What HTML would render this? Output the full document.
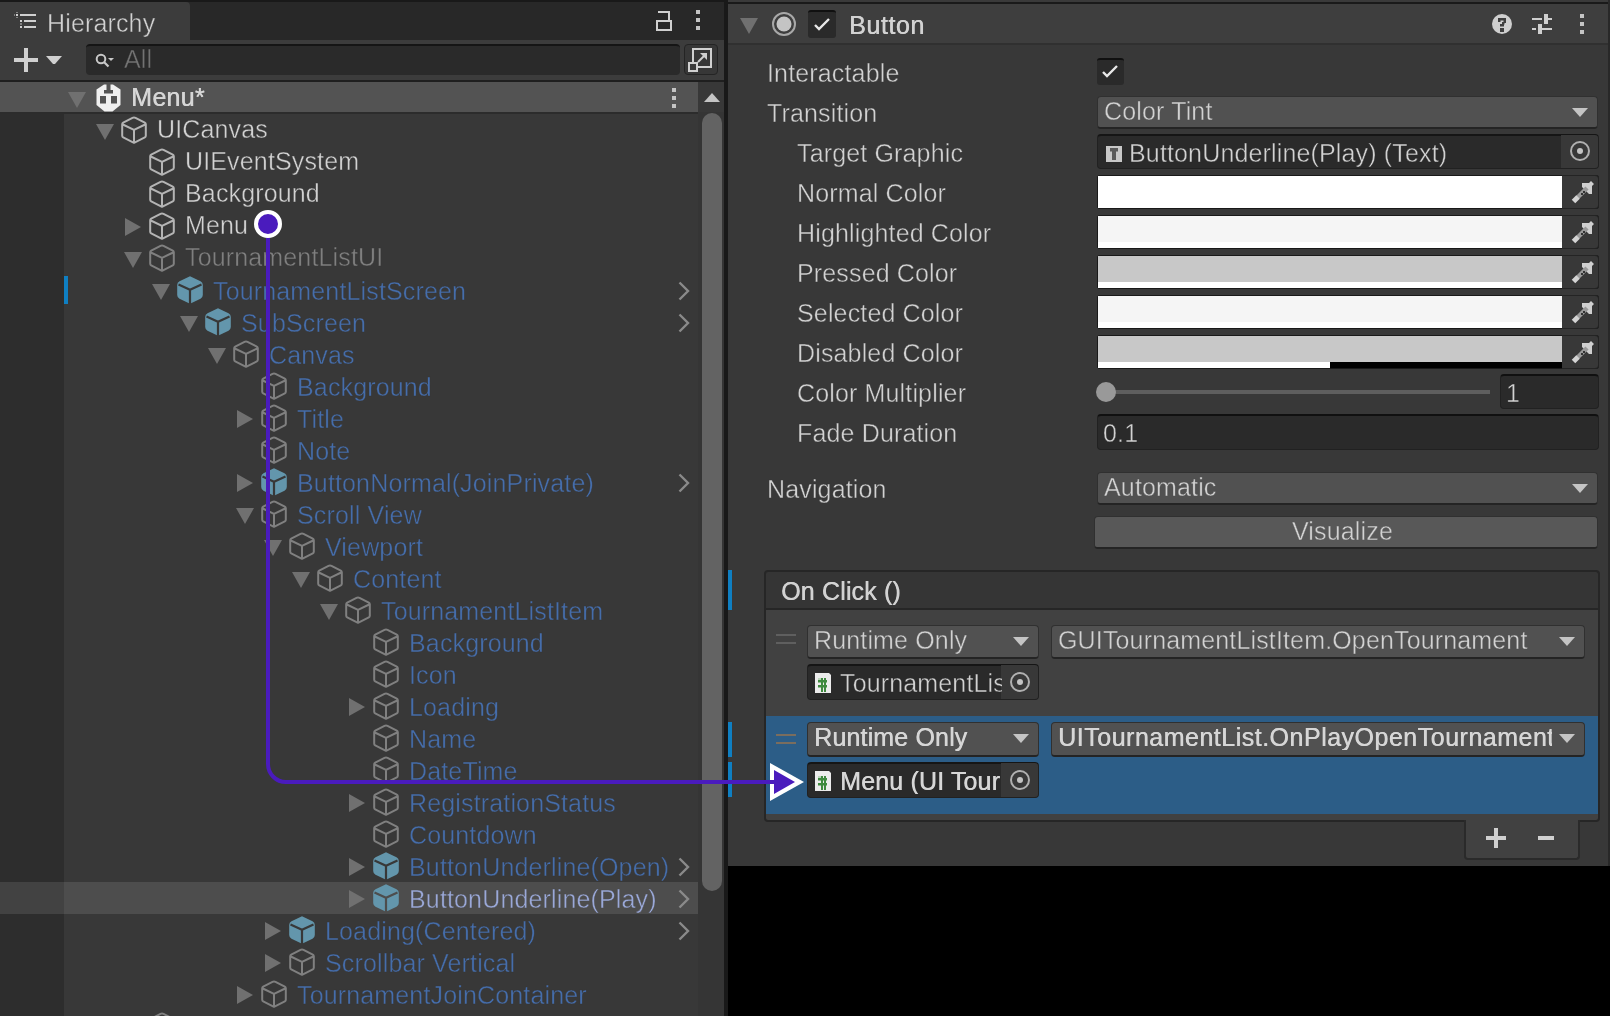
<!DOCTYPE html><html><head><meta charset="utf-8"><style>
html,body{margin:0;padding:0;background:#000;width:1610px;height:1016px;overflow:hidden;font-family:"Liberation Sans", sans-serif;}
.t{position:absolute;white-space:nowrap;letter-spacing:0.15px;will-change:transform;font-family:"Liberation Sans",sans-serif;}
.r{position:absolute;}
.s{position:absolute;overflow:visible;}
</style></head><body>
<div class="r" style="left:0px;top:0px;width:728px;height:1016px;background:#383838;"></div>
<div class="r" style="left:0px;top:0px;width:728px;height:2px;background:#191919;"></div>
<div class="r" style="left:0px;top:2px;width:724px;height:38px;background:#282828;"></div>
<div class="r" style="left:0px;top:2px;width:190px;height:38px;background:#3c3c3c;border-top-right-radius:4px;"></div>
<svg class="s" style="left:8px;top:6px;" width="40" height="30" viewBox="0 0 40 30"><g fill="#d0d0d0"><rect x="8" y="8" width="2" height="2"/><rect x="12" y="8" width="16" height="2"/><rect x="12" y="14" width="2" height="2"/><rect x="16" y="14" width="12" height="2"/><rect x="12" y="20" width="2" height="2"/><rect x="16" y="20" width="12" height="2"/></g><g fill="#808080"><rect x="8" y="6" width="2" height="1"/><rect x="8" y="11" width="2" height="1"/><rect x="12" y="17" width="2" height="2"/><rect x="6" y="8" width="1" height="2"/></g></svg>
<div class="t" style="left:47px;top:11px;color:#d2d2d2;font-size:25px;line-height:25px;-webkit-text-stroke:0.4px #3c3c3c;">Hierarchy</div>
<svg class="s" style="left:655px;top:9px;" width="18" height="22" viewBox="0 0 18 22"><path d="M3 3H14V11" fill="none" stroke="#d0d0d0" stroke-width="2"/><rect x="2" y="12" width="14" height="9" fill="none" stroke="#d0d0d0" stroke-width="2"/></svg>
<svg class="s" style="left:695px;top:10px;" width="6" height="20" viewBox="0 0 6 20"><g fill="#c4c4c4"><rect x="1" y="0" width="4" height="4"/><rect x="1" y="8" width="4" height="4"/><rect x="1" y="16" width="4" height="4"/></g></svg>
<div class="r" style="left:0px;top:40px;width:724px;height:40px;background:#3c3c3c;"></div>
<svg class="s" style="left:14px;top:48px;" width="24" height="24" viewBox="0 0 24 24"><path d="M12 0V24M0 12H24" stroke="#d0d0d0" stroke-width="4"/></svg>
<svg class="s" style="left:46px;top:56px;" width="16" height="9" viewBox="0 0 16 9"><path d="M0 0H16L9 8H7Z" fill="#d0d0d0"/></svg>
<div class="r" style="left:86px;top:44px;width:594px;height:31px;background:#2a2a2a;border-radius:4px;border-top:2px solid #151515;box-sizing:border-box;"></div>
<svg class="s" style="left:94px;top:52px;" width="24" height="18" viewBox="0 0 24 18"><circle cx="7" cy="7" r="4.3" fill="none" stroke="#c8c8c8" stroke-width="2"/><path d="M10 10L14.5 14.5" stroke="#c8c8c8" stroke-width="2.2"/><path d="M14 6H20L17 9Z" fill="#c8c8c8"/></svg>
<div class="t" style="left:124px;top:47px;color:#727272;font-size:25px;line-height:25px;-webkit-text-stroke:0.4px #2a2a2a;">All</div>
<div class="r" style="left:684px;top:44px;width:34px;height:31px;background:#373737;border-radius:4px;border:1px solid #242424;box-sizing:border-box;"></div>
<svg class="s" style="left:684px;top:44px;" width="34" height="32" viewBox="0 0 34 32"><rect x="9" y="5" width="18" height="18" fill="none" stroke="#d0d0d0" stroke-width="2"/><rect x="5" y="19" width="8" height="8" fill="#3a3a3a" stroke="#d0d0d0" stroke-width="2"/><path d="M14 18L21 11" stroke="#d0d0d0" stroke-width="2"/><path d="M16 9H23V16Z" fill="#d0d0d0"/></svg>
<div class="r" style="left:0px;top:80px;width:724px;height:2px;background:#1f1f1f;"></div>
<div class="r" style="left:0px;top:82px;width:698px;height:30px;background:#535353;"></div>
<svg class="s" style="left:68px;top:92px;" width="18" height="16" viewBox="0 0 18 16"><path d="M0 0H18L9.0 16Z" fill="#707070"/></svg>
<svg class="s" style="left:96px;top:84px;" width="25" height="28" viewBox="0 0 25 28"><path d="M8 0.5H17L24.5 5.5V21L16.5 27.5H8.5L0.5 21V5.5Z" fill="#f0f0f0"/><g fill="#535353"><rect x="10.5" y="0" width="4" height="7"/><rect x="8" y="6" width="9" height="3.5"/><rect x="4" y="12" width="6" height="7.5"/><rect x="15" y="12" width="6" height="7.5"/></g></svg>
<div class="t" style="left:131px;top:85px;color:#d6d6d6;font-size:25px;line-height:25px;text-shadow:0.5px 0 0 #d6d6d6;letter-spacing:0.3px;">Menu*</div>
<svg class="s" style="left:672px;top:88px;" width="4" height="20" viewBox="0 0 4 20"><g fill="#c4c4c4"><rect x="0" y="0" width="4" height="4"/><rect x="0" y="8" width="4" height="4"/><rect x="0" y="16" width="4" height="4"/></g></svg>
<div class="r" style="left:698px;top:82px;width:26px;height:934px;background:#353535;"></div>
<div class="r" style="left:698px;top:82px;width:26px;height:30px;background:#383838;"></div>
<svg class="s" style="left:704px;top:93px;" width="16" height="9" viewBox="0 0 16 9"><path d="M0 9H16L8 0Z" fill="#c4c4c4"/></svg>
<div class="r" style="left:702px;top:113px;width:20px;height:778px;background:#636363;border-radius:10px;"></div>
<div class="r" style="left:724px;top:0px;width:4px;height:1016px;background:#191919;"></div>
<div class="r" style="left:0px;top:112px;width:698px;height:2px;background:#2c2c2c;"></div>
<div class="r" style="left:0px;top:114px;width:64px;height:902px;background:#2d2d2d;"></div>
<svg class="s" style="left:96px;top:124px;" width="18" height="16" viewBox="0 0 18 16"><path d="M0 0H18L9.0 16Z" fill="#707070"/></svg>
<svg class="s" style="left:121px;top:116px;" width="26" height="28" viewBox="0 0 26 28"><path d="M11.5 1.8Q13 1 14.5 1.8L23.8 6.6Q24.8 7.1 24.8 8.2V19.8Q24.8 20.9 23.8 21.4L13 26.8L2.2 21.4Q1.2 20.9 1.2 19.8V8.2Q1.2 7.1 2.2 6.6Z M1.8 8.5L13 13.8L24.2 8.5 M13 13.8V26.8" fill="none" stroke="#b4b4b4" stroke-width="2" stroke-linejoin="round"/></svg>
<div class="t" style="left:157px;top:117px;color:#d2d2d2;font-size:25px;line-height:25px;-webkit-text-stroke:0.4px #383838;">UICanvas</div>
<svg class="s" style="left:149px;top:148px;" width="26" height="28" viewBox="0 0 26 28"><path d="M11.5 1.8Q13 1 14.5 1.8L23.8 6.6Q24.8 7.1 24.8 8.2V19.8Q24.8 20.9 23.8 21.4L13 26.8L2.2 21.4Q1.2 20.9 1.2 19.8V8.2Q1.2 7.1 2.2 6.6Z M1.8 8.5L13 13.8L24.2 8.5 M13 13.8V26.8" fill="none" stroke="#b4b4b4" stroke-width="2" stroke-linejoin="round"/></svg>
<div class="t" style="left:185px;top:149px;color:#d2d2d2;font-size:25px;line-height:25px;-webkit-text-stroke:0.4px #383838;">UIEventSystem</div>
<svg class="s" style="left:149px;top:180px;" width="26" height="28" viewBox="0 0 26 28"><path d="M11.5 1.8Q13 1 14.5 1.8L23.8 6.6Q24.8 7.1 24.8 8.2V19.8Q24.8 20.9 23.8 21.4L13 26.8L2.2 21.4Q1.2 20.9 1.2 19.8V8.2Q1.2 7.1 2.2 6.6Z M1.8 8.5L13 13.8L24.2 8.5 M13 13.8V26.8" fill="none" stroke="#b4b4b4" stroke-width="2" stroke-linejoin="round"/></svg>
<div class="t" style="left:185px;top:181px;color:#d2d2d2;font-size:25px;line-height:25px;-webkit-text-stroke:0.4px #383838;">Background</div>
<svg class="s" style="left:125px;top:218px;" width="16" height="18" viewBox="0 0 16 18"><path d="M0 0L16 9.0L0 18Z" fill="#707070"/></svg>
<svg class="s" style="left:149px;top:212px;" width="26" height="28" viewBox="0 0 26 28"><path d="M11.5 1.8Q13 1 14.5 1.8L23.8 6.6Q24.8 7.1 24.8 8.2V19.8Q24.8 20.9 23.8 21.4L13 26.8L2.2 21.4Q1.2 20.9 1.2 19.8V8.2Q1.2 7.1 2.2 6.6Z M1.8 8.5L13 13.8L24.2 8.5 M13 13.8V26.8" fill="none" stroke="#b4b4b4" stroke-width="2" stroke-linejoin="round"/></svg>
<div class="t" style="left:185px;top:213px;color:#d2d2d2;font-size:25px;line-height:25px;-webkit-text-stroke:0.4px #383838;">Menu</div>
<svg class="s" style="left:124px;top:252px;" width="18" height="16" viewBox="0 0 18 16"><path d="M0 0H18L9.0 16Z" fill="#707070"/></svg>
<svg class="s" style="left:149px;top:244px;" width="26" height="28" viewBox="0 0 26 28"><path d="M11.5 1.8Q13 1 14.5 1.8L23.8 6.6Q24.8 7.1 24.8 8.2V19.8Q24.8 20.9 23.8 21.4L13 26.8L2.2 21.4Q1.2 20.9 1.2 19.8V8.2Q1.2 7.1 2.2 6.6Z M1.8 8.5L13 13.8L24.2 8.5 M13 13.8V26.8" fill="none" stroke="#808080" stroke-width="2" stroke-linejoin="round"/></svg>
<div class="t" style="left:185px;top:245px;color:#7f7f7f;font-size:25px;line-height:25px;-webkit-text-stroke:0.4px #383838;">TournamentListUI</div>
<svg class="s" style="left:152px;top:284px;" width="18" height="16" viewBox="0 0 18 16"><path d="M0 0H18L9.0 16Z" fill="#707070"/></svg>
<svg class="s" style="left:177px;top:276px;" width="26" height="28" viewBox="0 0 26 28"><path d="M13 0.3L23.5 5.3Q25.8 6.4 25.8 9V19Q25.8 21.6 23.5 22.7L13 27.8L2.5 22.7Q0.2 21.6 0.2 19V9Q0.2 6.4 2.5 5.3Z" fill="#6396ac"/><path d="M1.5 8.5L13 13.8L24.5 8.5 M13 13.8V28" fill="none" stroke="#383838" stroke-width="2.2"/></svg>
<div class="t" style="left:213px;top:279px;color:#456dab;font-size:25px;line-height:25px;-webkit-text-stroke:0.4px #383838;">TournamentListScreen</div>
<svg class="s" style="left:677px;top:281px;" width="14" height="20" viewBox="0 0 14 20"><path d="M2.5 1.5L11 10L2.5 18.5" fill="none" stroke="#8a8a8a" stroke-width="2.4"/></svg>
<svg class="s" style="left:180px;top:316px;" width="18" height="16" viewBox="0 0 18 16"><path d="M0 0H18L9.0 16Z" fill="#707070"/></svg>
<svg class="s" style="left:205px;top:308px;" width="26" height="28" viewBox="0 0 26 28"><path d="M13 0.3L23.5 5.3Q25.8 6.4 25.8 9V19Q25.8 21.6 23.5 22.7L13 27.8L2.5 22.7Q0.2 21.6 0.2 19V9Q0.2 6.4 2.5 5.3Z" fill="#6396ac"/><path d="M1.5 8.5L13 13.8L24.5 8.5 M13 13.8V28" fill="none" stroke="#383838" stroke-width="2.2"/></svg>
<div class="t" style="left:241px;top:311px;color:#456dab;font-size:25px;line-height:25px;-webkit-text-stroke:0.4px #383838;">SubScreen</div>
<svg class="s" style="left:677px;top:313px;" width="14" height="20" viewBox="0 0 14 20"><path d="M2.5 1.5L11 10L2.5 18.5" fill="none" stroke="#8a8a8a" stroke-width="2.4"/></svg>
<svg class="s" style="left:208px;top:348px;" width="18" height="16" viewBox="0 0 18 16"><path d="M0 0H18L9.0 16Z" fill="#707070"/></svg>
<svg class="s" style="left:233px;top:340px;" width="26" height="28" viewBox="0 0 26 28"><path d="M11.5 1.8Q13 1 14.5 1.8L23.8 6.6Q24.8 7.1 24.8 8.2V19.8Q24.8 20.9 23.8 21.4L13 26.8L2.2 21.4Q1.2 20.9 1.2 19.8V8.2Q1.2 7.1 2.2 6.6Z M1.8 8.5L13 13.8L24.2 8.5 M13 13.8V26.8" fill="none" stroke="#808080" stroke-width="2" stroke-linejoin="round"/></svg>
<div class="t" style="left:269px;top:343px;color:#456dab;font-size:25px;line-height:25px;-webkit-text-stroke:0.4px #383838;">Canvas</div>
<svg class="s" style="left:261px;top:372px;" width="26" height="28" viewBox="0 0 26 28"><path d="M11.5 1.8Q13 1 14.5 1.8L23.8 6.6Q24.8 7.1 24.8 8.2V19.8Q24.8 20.9 23.8 21.4L13 26.8L2.2 21.4Q1.2 20.9 1.2 19.8V8.2Q1.2 7.1 2.2 6.6Z M1.8 8.5L13 13.8L24.2 8.5 M13 13.8V26.8" fill="none" stroke="#808080" stroke-width="2" stroke-linejoin="round"/></svg>
<div class="t" style="left:297px;top:375px;color:#456dab;font-size:25px;line-height:25px;-webkit-text-stroke:0.4px #383838;">Background</div>
<svg class="s" style="left:237px;top:410px;" width="16" height="18" viewBox="0 0 16 18"><path d="M0 0L16 9.0L0 18Z" fill="#707070"/></svg>
<svg class="s" style="left:261px;top:404px;" width="26" height="28" viewBox="0 0 26 28"><path d="M11.5 1.8Q13 1 14.5 1.8L23.8 6.6Q24.8 7.1 24.8 8.2V19.8Q24.8 20.9 23.8 21.4L13 26.8L2.2 21.4Q1.2 20.9 1.2 19.8V8.2Q1.2 7.1 2.2 6.6Z M1.8 8.5L13 13.8L24.2 8.5 M13 13.8V26.8" fill="none" stroke="#808080" stroke-width="2" stroke-linejoin="round"/></svg>
<div class="t" style="left:297px;top:407px;color:#456dab;font-size:25px;line-height:25px;-webkit-text-stroke:0.4px #383838;">Title</div>
<svg class="s" style="left:261px;top:436px;" width="26" height="28" viewBox="0 0 26 28"><path d="M11.5 1.8Q13 1 14.5 1.8L23.8 6.6Q24.8 7.1 24.8 8.2V19.8Q24.8 20.9 23.8 21.4L13 26.8L2.2 21.4Q1.2 20.9 1.2 19.8V8.2Q1.2 7.1 2.2 6.6Z M1.8 8.5L13 13.8L24.2 8.5 M13 13.8V26.8" fill="none" stroke="#808080" stroke-width="2" stroke-linejoin="round"/></svg>
<div class="t" style="left:297px;top:439px;color:#456dab;font-size:25px;line-height:25px;-webkit-text-stroke:0.4px #383838;">Note</div>
<svg class="s" style="left:237px;top:474px;" width="16" height="18" viewBox="0 0 16 18"><path d="M0 0L16 9.0L0 18Z" fill="#707070"/></svg>
<svg class="s" style="left:261px;top:468px;" width="26" height="28" viewBox="0 0 26 28"><path d="M13 0.3L23.5 5.3Q25.8 6.4 25.8 9V19Q25.8 21.6 23.5 22.7L13 27.8L2.5 22.7Q0.2 21.6 0.2 19V9Q0.2 6.4 2.5 5.3Z" fill="#6396ac"/><path d="M1.5 8.5L13 13.8L24.5 8.5 M13 13.8V28" fill="none" stroke="#383838" stroke-width="2.2"/></svg>
<div class="t" style="left:297px;top:471px;color:#456dab;font-size:25px;line-height:25px;-webkit-text-stroke:0.4px #383838;">ButtonNormal(JoinPrivate)</div>
<svg class="s" style="left:677px;top:473px;" width="14" height="20" viewBox="0 0 14 20"><path d="M2.5 1.5L11 10L2.5 18.5" fill="none" stroke="#8a8a8a" stroke-width="2.4"/></svg>
<svg class="s" style="left:236px;top:508px;" width="18" height="16" viewBox="0 0 18 16"><path d="M0 0H18L9.0 16Z" fill="#707070"/></svg>
<svg class="s" style="left:261px;top:500px;" width="26" height="28" viewBox="0 0 26 28"><path d="M11.5 1.8Q13 1 14.5 1.8L23.8 6.6Q24.8 7.1 24.8 8.2V19.8Q24.8 20.9 23.8 21.4L13 26.8L2.2 21.4Q1.2 20.9 1.2 19.8V8.2Q1.2 7.1 2.2 6.6Z M1.8 8.5L13 13.8L24.2 8.5 M13 13.8V26.8" fill="none" stroke="#808080" stroke-width="2" stroke-linejoin="round"/></svg>
<div class="t" style="left:297px;top:503px;color:#456dab;font-size:25px;line-height:25px;-webkit-text-stroke:0.4px #383838;">Scroll View</div>
<svg class="s" style="left:264px;top:540px;" width="18" height="16" viewBox="0 0 18 16"><path d="M0 0H18L9.0 16Z" fill="#707070"/></svg>
<svg class="s" style="left:289px;top:532px;" width="26" height="28" viewBox="0 0 26 28"><path d="M11.5 1.8Q13 1 14.5 1.8L23.8 6.6Q24.8 7.1 24.8 8.2V19.8Q24.8 20.9 23.8 21.4L13 26.8L2.2 21.4Q1.2 20.9 1.2 19.8V8.2Q1.2 7.1 2.2 6.6Z M1.8 8.5L13 13.8L24.2 8.5 M13 13.8V26.8" fill="none" stroke="#808080" stroke-width="2" stroke-linejoin="round"/></svg>
<div class="t" style="left:325px;top:535px;color:#456dab;font-size:25px;line-height:25px;-webkit-text-stroke:0.4px #383838;">Viewport</div>
<svg class="s" style="left:292px;top:572px;" width="18" height="16" viewBox="0 0 18 16"><path d="M0 0H18L9.0 16Z" fill="#707070"/></svg>
<svg class="s" style="left:317px;top:564px;" width="26" height="28" viewBox="0 0 26 28"><path d="M11.5 1.8Q13 1 14.5 1.8L23.8 6.6Q24.8 7.1 24.8 8.2V19.8Q24.8 20.9 23.8 21.4L13 26.8L2.2 21.4Q1.2 20.9 1.2 19.8V8.2Q1.2 7.1 2.2 6.6Z M1.8 8.5L13 13.8L24.2 8.5 M13 13.8V26.8" fill="none" stroke="#808080" stroke-width="2" stroke-linejoin="round"/></svg>
<div class="t" style="left:353px;top:567px;color:#456dab;font-size:25px;line-height:25px;-webkit-text-stroke:0.4px #383838;">Content</div>
<svg class="s" style="left:320px;top:604px;" width="18" height="16" viewBox="0 0 18 16"><path d="M0 0H18L9.0 16Z" fill="#707070"/></svg>
<svg class="s" style="left:345px;top:596px;" width="26" height="28" viewBox="0 0 26 28"><path d="M11.5 1.8Q13 1 14.5 1.8L23.8 6.6Q24.8 7.1 24.8 8.2V19.8Q24.8 20.9 23.8 21.4L13 26.8L2.2 21.4Q1.2 20.9 1.2 19.8V8.2Q1.2 7.1 2.2 6.6Z M1.8 8.5L13 13.8L24.2 8.5 M13 13.8V26.8" fill="none" stroke="#808080" stroke-width="2" stroke-linejoin="round"/></svg>
<div class="t" style="left:381px;top:599px;color:#456dab;font-size:25px;line-height:25px;-webkit-text-stroke:0.4px #383838;">TournamentListItem</div>
<svg class="s" style="left:373px;top:628px;" width="26" height="28" viewBox="0 0 26 28"><path d="M11.5 1.8Q13 1 14.5 1.8L23.8 6.6Q24.8 7.1 24.8 8.2V19.8Q24.8 20.9 23.8 21.4L13 26.8L2.2 21.4Q1.2 20.9 1.2 19.8V8.2Q1.2 7.1 2.2 6.6Z M1.8 8.5L13 13.8L24.2 8.5 M13 13.8V26.8" fill="none" stroke="#808080" stroke-width="2" stroke-linejoin="round"/></svg>
<div class="t" style="left:409px;top:631px;color:#456dab;font-size:25px;line-height:25px;-webkit-text-stroke:0.4px #383838;">Background</div>
<svg class="s" style="left:373px;top:660px;" width="26" height="28" viewBox="0 0 26 28"><path d="M11.5 1.8Q13 1 14.5 1.8L23.8 6.6Q24.8 7.1 24.8 8.2V19.8Q24.8 20.9 23.8 21.4L13 26.8L2.2 21.4Q1.2 20.9 1.2 19.8V8.2Q1.2 7.1 2.2 6.6Z M1.8 8.5L13 13.8L24.2 8.5 M13 13.8V26.8" fill="none" stroke="#808080" stroke-width="2" stroke-linejoin="round"/></svg>
<div class="t" style="left:409px;top:663px;color:#456dab;font-size:25px;line-height:25px;-webkit-text-stroke:0.4px #383838;">Icon</div>
<svg class="s" style="left:349px;top:698px;" width="16" height="18" viewBox="0 0 16 18"><path d="M0 0L16 9.0L0 18Z" fill="#707070"/></svg>
<svg class="s" style="left:373px;top:692px;" width="26" height="28" viewBox="0 0 26 28"><path d="M11.5 1.8Q13 1 14.5 1.8L23.8 6.6Q24.8 7.1 24.8 8.2V19.8Q24.8 20.9 23.8 21.4L13 26.8L2.2 21.4Q1.2 20.9 1.2 19.8V8.2Q1.2 7.1 2.2 6.6Z M1.8 8.5L13 13.8L24.2 8.5 M13 13.8V26.8" fill="none" stroke="#808080" stroke-width="2" stroke-linejoin="round"/></svg>
<div class="t" style="left:409px;top:695px;color:#456dab;font-size:25px;line-height:25px;-webkit-text-stroke:0.4px #383838;">Loading</div>
<svg class="s" style="left:373px;top:724px;" width="26" height="28" viewBox="0 0 26 28"><path d="M11.5 1.8Q13 1 14.5 1.8L23.8 6.6Q24.8 7.1 24.8 8.2V19.8Q24.8 20.9 23.8 21.4L13 26.8L2.2 21.4Q1.2 20.9 1.2 19.8V8.2Q1.2 7.1 2.2 6.6Z M1.8 8.5L13 13.8L24.2 8.5 M13 13.8V26.8" fill="none" stroke="#808080" stroke-width="2" stroke-linejoin="round"/></svg>
<div class="t" style="left:409px;top:727px;color:#456dab;font-size:25px;line-height:25px;-webkit-text-stroke:0.4px #383838;">Name</div>
<svg class="s" style="left:373px;top:756px;" width="26" height="28" viewBox="0 0 26 28"><path d="M11.5 1.8Q13 1 14.5 1.8L23.8 6.6Q24.8 7.1 24.8 8.2V19.8Q24.8 20.9 23.8 21.4L13 26.8L2.2 21.4Q1.2 20.9 1.2 19.8V8.2Q1.2 7.1 2.2 6.6Z M1.8 8.5L13 13.8L24.2 8.5 M13 13.8V26.8" fill="none" stroke="#808080" stroke-width="2" stroke-linejoin="round"/></svg>
<div class="t" style="left:409px;top:759px;color:#456dab;font-size:25px;line-height:25px;-webkit-text-stroke:0.4px #383838;">DateTime</div>
<svg class="s" style="left:349px;top:794px;" width="16" height="18" viewBox="0 0 16 18"><path d="M0 0L16 9.0L0 18Z" fill="#707070"/></svg>
<svg class="s" style="left:373px;top:788px;" width="26" height="28" viewBox="0 0 26 28"><path d="M11.5 1.8Q13 1 14.5 1.8L23.8 6.6Q24.8 7.1 24.8 8.2V19.8Q24.8 20.9 23.8 21.4L13 26.8L2.2 21.4Q1.2 20.9 1.2 19.8V8.2Q1.2 7.1 2.2 6.6Z M1.8 8.5L13 13.8L24.2 8.5 M13 13.8V26.8" fill="none" stroke="#808080" stroke-width="2" stroke-linejoin="round"/></svg>
<div class="t" style="left:409px;top:791px;color:#456dab;font-size:25px;line-height:25px;-webkit-text-stroke:0.4px #383838;">RegistrationStatus</div>
<svg class="s" style="left:373px;top:820px;" width="26" height="28" viewBox="0 0 26 28"><path d="M11.5 1.8Q13 1 14.5 1.8L23.8 6.6Q24.8 7.1 24.8 8.2V19.8Q24.8 20.9 23.8 21.4L13 26.8L2.2 21.4Q1.2 20.9 1.2 19.8V8.2Q1.2 7.1 2.2 6.6Z M1.8 8.5L13 13.8L24.2 8.5 M13 13.8V26.8" fill="none" stroke="#808080" stroke-width="2" stroke-linejoin="round"/></svg>
<div class="t" style="left:409px;top:823px;color:#456dab;font-size:25px;line-height:25px;-webkit-text-stroke:0.4px #383838;">Countdown</div>
<svg class="s" style="left:349px;top:858px;" width="16" height="18" viewBox="0 0 16 18"><path d="M0 0L16 9.0L0 18Z" fill="#707070"/></svg>
<svg class="s" style="left:373px;top:852px;" width="26" height="28" viewBox="0 0 26 28"><path d="M13 0.3L23.5 5.3Q25.8 6.4 25.8 9V19Q25.8 21.6 23.5 22.7L13 27.8L2.5 22.7Q0.2 21.6 0.2 19V9Q0.2 6.4 2.5 5.3Z" fill="#6396ac"/><path d="M1.5 8.5L13 13.8L24.5 8.5 M13 13.8V28" fill="none" stroke="#383838" stroke-width="2.2"/></svg>
<div class="t" style="left:409px;top:855px;color:#456dab;font-size:25px;line-height:25px;-webkit-text-stroke:0.4px #383838;">ButtonUnderline(Open)</div>
<svg class="s" style="left:677px;top:857px;" width="14" height="20" viewBox="0 0 14 20"><path d="M2.5 1.5L11 10L2.5 18.5" fill="none" stroke="#8a8a8a" stroke-width="2.4"/></svg>
<div class="r" style="left:0px;top:882px;width:64px;height:32px;background:#424242;"></div>
<div class="r" style="left:64px;top:882px;width:634px;height:32px;background:#4d4d4d;"></div>
<svg class="s" style="left:349px;top:890px;" width="16" height="18" viewBox="0 0 16 18"><path d="M0 0L16 9.0L0 18Z" fill="#707070"/></svg>
<svg class="s" style="left:373px;top:884px;" width="26" height="28" viewBox="0 0 26 28"><path d="M13 0.3L23.5 5.3Q25.8 6.4 25.8 9V19Q25.8 21.6 23.5 22.7L13 27.8L2.5 22.7Q0.2 21.6 0.2 19V9Q0.2 6.4 2.5 5.3Z" fill="#6396ac"/><path d="M1.5 8.5L13 13.8L24.5 8.5 M13 13.8V28" fill="none" stroke="#4d4d4d" stroke-width="2.2"/></svg>
<div class="t" style="left:409px;top:887px;color:#9aa8d8;font-size:25px;line-height:25px;-webkit-text-stroke:0.4px #4d4d4d;">ButtonUnderline(Play)</div>
<svg class="s" style="left:677px;top:889px;" width="14" height="20" viewBox="0 0 14 20"><path d="M2.5 1.5L11 10L2.5 18.5" fill="none" stroke="#8a8a8a" stroke-width="2.4"/></svg>
<svg class="s" style="left:265px;top:922px;" width="16" height="18" viewBox="0 0 16 18"><path d="M0 0L16 9.0L0 18Z" fill="#707070"/></svg>
<svg class="s" style="left:289px;top:916px;" width="26" height="28" viewBox="0 0 26 28"><path d="M13 0.3L23.5 5.3Q25.8 6.4 25.8 9V19Q25.8 21.6 23.5 22.7L13 27.8L2.5 22.7Q0.2 21.6 0.2 19V9Q0.2 6.4 2.5 5.3Z" fill="#6396ac"/><path d="M1.5 8.5L13 13.8L24.5 8.5 M13 13.8V28" fill="none" stroke="#383838" stroke-width="2.2"/></svg>
<div class="t" style="left:325px;top:919px;color:#456dab;font-size:25px;line-height:25px;-webkit-text-stroke:0.4px #383838;">Loading(Centered)</div>
<svg class="s" style="left:677px;top:921px;" width="14" height="20" viewBox="0 0 14 20"><path d="M2.5 1.5L11 10L2.5 18.5" fill="none" stroke="#8a8a8a" stroke-width="2.4"/></svg>
<svg class="s" style="left:265px;top:954px;" width="16" height="18" viewBox="0 0 16 18"><path d="M0 0L16 9.0L0 18Z" fill="#707070"/></svg>
<svg class="s" style="left:289px;top:948px;" width="26" height="28" viewBox="0 0 26 28"><path d="M11.5 1.8Q13 1 14.5 1.8L23.8 6.6Q24.8 7.1 24.8 8.2V19.8Q24.8 20.9 23.8 21.4L13 26.8L2.2 21.4Q1.2 20.9 1.2 19.8V8.2Q1.2 7.1 2.2 6.6Z M1.8 8.5L13 13.8L24.2 8.5 M13 13.8V26.8" fill="none" stroke="#808080" stroke-width="2" stroke-linejoin="round"/></svg>
<div class="t" style="left:325px;top:951px;color:#456dab;font-size:25px;line-height:25px;-webkit-text-stroke:0.4px #383838;">Scrollbar Vertical</div>
<svg class="s" style="left:237px;top:986px;" width="16" height="18" viewBox="0 0 16 18"><path d="M0 0L16 9.0L0 18Z" fill="#707070"/></svg>
<svg class="s" style="left:261px;top:980px;" width="26" height="28" viewBox="0 0 26 28"><path d="M11.5 1.8Q13 1 14.5 1.8L23.8 6.6Q24.8 7.1 24.8 8.2V19.8Q24.8 20.9 23.8 21.4L13 26.8L2.2 21.4Q1.2 20.9 1.2 19.8V8.2Q1.2 7.1 2.2 6.6Z M1.8 8.5L13 13.8L24.2 8.5 M13 13.8V26.8" fill="none" stroke="#808080" stroke-width="2" stroke-linejoin="round"/></svg>
<div class="t" style="left:297px;top:983px;color:#456dab;font-size:25px;line-height:25px;-webkit-text-stroke:0.4px #383838;">TournamentJoinContainer</div>
<svg class="s" style="left:149px;top:1012px;" width="26" height="28" viewBox="0 0 26 28"><path d="M11.5 1.8Q13 1 14.5 1.8L23.8 6.6Q24.8 7.1 24.8 8.2V19.8Q24.8 20.9 23.8 21.4L13 26.8L2.2 21.4Q1.2 20.9 1.2 19.8V8.2Q1.2 7.1 2.2 6.6Z M1.8 8.5L13 13.8L24.2 8.5 M13 13.8V26.8" fill="none" stroke="#808080" stroke-width="2" stroke-linejoin="round"/></svg>
<div class="r" style="left:64px;top:276px;width:4px;height:28px;background:#0f7fc2;"></div>
<div class="r" style="left:728px;top:0px;width:882px;height:866px;background:#383838;"></div>
<div class="r" style="left:728px;top:0px;width:882px;height:2px;background:#3a3a3a;"></div>
<div class="r" style="left:728px;top:2px;width:882px;height:2px;background:#1a1a1a;"></div>
<div class="r" style="left:728px;top:4px;width:880px;height:39px;background:#3e3e3e;"></div>
<div class="r" style="left:728px;top:43px;width:880px;height:2px;background:#303030;"></div>
<div class="r" style="left:1608px;top:0px;width:2px;height:866px;background:#282828;"></div>
<svg class="s" style="left:740px;top:18px;" width="18" height="16" viewBox="0 0 18 16"><path d="M0 0H18L9.0 16Z" fill="#707070"/></svg>
<svg class="s" style="left:772px;top:12px;" width="24" height="24" viewBox="0 0 24 24"><circle cx="12" cy="12" r="11" fill="none" stroke="#a8a8a8" stroke-width="2"/><circle cx="12" cy="12" r="7.5" fill="#c4c4c4"/></svg>
<div class="r" style="left:808px;top:10px;width:28px;height:28px;background:#2a2a2a;border-radius:3px;border-top:2px solid #101010;box-sizing:border-box;"></div>
<svg class="s" style="left:808px;top:10px;" width="28" height="28" viewBox="0 0 28 28"><path d="M7 15L11 19L21 9" fill="none" stroke="#e8e8e8" stroke-width="2.4"/></svg>
<div class="t" style="left:849px;top:13px;color:#d2d2d2;font-size:25px;line-height:25px;text-shadow:0.5px 0 0 #d2d2d2;letter-spacing:0.6px;">Button</div>
<svg class="s" style="left:1492px;top:14px;" width="20" height="20" viewBox="0 0 20 20"><circle cx="10" cy="10" r="10" fill="#cfcfcf"/><g fill="#3e3e3e"><rect x="6" y="4" width="8" height="2.5"/><rect x="6" y="4" width="2.5" height="4"/><rect x="11.5" y="4" width="2.5" height="5"/><rect x="10" y="8" width="2.5" height="2.5"/><rect x="8" y="10" width="4" height="2.5"/><rect x="8" y="14" width="4" height="4"/></g></svg>
<svg class="s" style="left:1532px;top:14px;" width="20" height="20" viewBox="0 0 20 20"><g fill="#cfcfcf"><rect x="0" y="4" width="10" height="2"/><rect x="16" y="4" width="4" height="2"/><rect x="12" y="0" width="4" height="10"/><rect x="0" y="14" width="4" height="2"/><rect x="10" y="14" width="10" height="2"/><rect x="6" y="10" width="4" height="10"/></g></svg>
<svg class="s" style="left:1580px;top:14px;" width="4" height="20" viewBox="0 0 4 20"><g fill="#c4c4c4"><rect x="0" y="0" width="4" height="4"/><rect x="0" y="8" width="4" height="4"/><rect x="0" y="16" width="4" height="4"/></g></svg>
<div class="t" style="left:767px;top:61px;color:#d2d2d2;font-size:25px;line-height:25px;-webkit-text-stroke:0.4px #383838;">Interactable</div>
<div class="r" style="left:1097px;top:58px;width:27px;height:27px;background:#2a2a2a;border-radius:3px;border-top:2px solid #101010;box-sizing:border-box;"></div>
<svg class="s" style="left:1097px;top:58px;" width="27" height="27" viewBox="0 0 27 27"><path d="M6 14L10 18L20 8" fill="none" stroke="#e8e8e8" stroke-width="2.4"/></svg>
<div class="t" style="left:767px;top:101px;color:#d2d2d2;font-size:25px;line-height:25px;-webkit-text-stroke:0.4px #383838;">Transition</div>
<div class="r" style="left:1097px;top:96px;width:501px;height:33px;background:#515151;border-radius:4px;border:1px solid #303030;border-bottom:2px solid #242424;box-sizing:border-box;"></div>
<div class="t" style="left:1104px;top:99px;color:#d2d2d2;font-size:25px;line-height:25px;-webkit-text-stroke:0.4px #515151;">Color Tint</div>
<svg class="s" style="left:1572px;top:108px;" width="16" height="9" viewBox="0 0 16 9"><path d="M0 0H16L8 9Z" fill="#c4c4c4"/></svg>
<div class="t" style="left:797px;top:141px;color:#d2d2d2;font-size:25px;line-height:25px;-webkit-text-stroke:0.4px #383838;">Target Graphic</div>
<div class="r" style="left:1097px;top:134px;width:502px;height:35px;background:#2a2a2a;border-radius:4px;border:1px solid #212121;border-top:2px solid #151515;box-sizing:border-box;overflow:hidden;"></div>
<div class="r" style="left:1561px;top:135px;width:37px;height:33px;background:#383838;border-radius:0 3px 3px 0;"></div>
<svg class="s" style="left:1570px;top:141px;" width="20" height="20" viewBox="0 0 20 20"><circle cx="10" cy="10" r="9" fill="none" stroke="#b0b0b0" stroke-width="2"/><circle cx="10" cy="10" r="3" fill="#c4c4c4"/></svg>
<svg class="s" style="left:1106px;top:146px;" width="16" height="16" viewBox="0 0 16 16"><rect width="16" height="16" fill="#c8c8c8"/><path d="M4 2H12V5.5H10V14H6V5.5H4Z" fill="#5a5a5a"/></svg>
<div class="t" style="left:1129px;top:141px;color:#d2d2d2;font-size:25px;line-height:25px;-webkit-text-stroke:0.4px #2a2a2a;">ButtonUnderline(Play) (Text)</div>
<div class="t" style="left:797px;top:181px;color:#d2d2d2;font-size:25px;line-height:25px;-webkit-text-stroke:0.4px #383838;">Normal Color</div>
<div class="r" style="left:1097px;top:175px;width:502px;height:34px;background:#191919;border-radius:3px;"></div>
<div class="r" style="left:1098px;top:176px;width:464px;height:32px;background:#ffffff;"></div>
<div class="r" style="left:1098px;top:202px;width:464px;height:6px;background:#ffffff;"></div>
<div class="r" style="left:1562px;top:175px;width:37px;height:34px;background:#383838;border-radius:0 4px 4px 0;border:1px solid #242424;border-left:none;box-sizing:border-box;"></div>
<svg class="s" style="left:1572px;top:179px;" width="22" height="24" viewBox="0 0 22 24"><path d="M10 4H17L19 2L22 5L20 7V15H17L10 8Z" fill="#d0d0d0"/><path d="M15 9L5 19" stroke="#9a9a9a" stroke-width="4.5"/><path d="M6 18L1.5 22.5" stroke="#d4d4d4" stroke-width="5"/><rect x="9" y="14" width="2" height="2" fill="#333"/><rect x="11" y="12" width="2" height="2" fill="#333"/></svg>
<div class="t" style="left:797px;top:221px;color:#d2d2d2;font-size:25px;line-height:25px;-webkit-text-stroke:0.4px #383838;">Highlighted Color</div>
<div class="r" style="left:1097px;top:215px;width:502px;height:34px;background:#191919;border-radius:3px;"></div>
<div class="r" style="left:1098px;top:216px;width:464px;height:32px;background:#f5f5f5;"></div>
<div class="r" style="left:1098px;top:242px;width:464px;height:6px;background:#ffffff;"></div>
<div class="r" style="left:1562px;top:215px;width:37px;height:34px;background:#383838;border-radius:0 4px 4px 0;border:1px solid #242424;border-left:none;box-sizing:border-box;"></div>
<svg class="s" style="left:1572px;top:219px;" width="22" height="24" viewBox="0 0 22 24"><path d="M10 4H17L19 2L22 5L20 7V15H17L10 8Z" fill="#d0d0d0"/><path d="M15 9L5 19" stroke="#9a9a9a" stroke-width="4.5"/><path d="M6 18L1.5 22.5" stroke="#d4d4d4" stroke-width="5"/><rect x="9" y="14" width="2" height="2" fill="#333"/><rect x="11" y="12" width="2" height="2" fill="#333"/></svg>
<div class="t" style="left:797px;top:261px;color:#d2d2d2;font-size:25px;line-height:25px;-webkit-text-stroke:0.4px #383838;">Pressed Color</div>
<div class="r" style="left:1097px;top:255px;width:502px;height:34px;background:#191919;border-radius:3px;"></div>
<div class="r" style="left:1098px;top:256px;width:464px;height:32px;background:#c8c8c8;"></div>
<div class="r" style="left:1098px;top:282px;width:464px;height:6px;background:#ffffff;"></div>
<div class="r" style="left:1562px;top:255px;width:37px;height:34px;background:#383838;border-radius:0 4px 4px 0;border:1px solid #242424;border-left:none;box-sizing:border-box;"></div>
<svg class="s" style="left:1572px;top:259px;" width="22" height="24" viewBox="0 0 22 24"><path d="M10 4H17L19 2L22 5L20 7V15H17L10 8Z" fill="#d0d0d0"/><path d="M15 9L5 19" stroke="#9a9a9a" stroke-width="4.5"/><path d="M6 18L1.5 22.5" stroke="#d4d4d4" stroke-width="5"/><rect x="9" y="14" width="2" height="2" fill="#333"/><rect x="11" y="12" width="2" height="2" fill="#333"/></svg>
<div class="t" style="left:797px;top:301px;color:#d2d2d2;font-size:25px;line-height:25px;-webkit-text-stroke:0.4px #383838;">Selected Color</div>
<div class="r" style="left:1097px;top:295px;width:502px;height:34px;background:#191919;border-radius:3px;"></div>
<div class="r" style="left:1098px;top:296px;width:464px;height:32px;background:#f5f5f5;"></div>
<div class="r" style="left:1098px;top:322px;width:464px;height:6px;background:#ffffff;"></div>
<div class="r" style="left:1562px;top:295px;width:37px;height:34px;background:#383838;border-radius:0 4px 4px 0;border:1px solid #242424;border-left:none;box-sizing:border-box;"></div>
<svg class="s" style="left:1572px;top:299px;" width="22" height="24" viewBox="0 0 22 24"><path d="M10 4H17L19 2L22 5L20 7V15H17L10 8Z" fill="#d0d0d0"/><path d="M15 9L5 19" stroke="#9a9a9a" stroke-width="4.5"/><path d="M6 18L1.5 22.5" stroke="#d4d4d4" stroke-width="5"/><rect x="9" y="14" width="2" height="2" fill="#333"/><rect x="11" y="12" width="2" height="2" fill="#333"/></svg>
<div class="t" style="left:797px;top:341px;color:#d2d2d2;font-size:25px;line-height:25px;-webkit-text-stroke:0.4px #383838;">Disabled Color</div>
<div class="r" style="left:1097px;top:335px;width:502px;height:34px;background:#191919;border-radius:3px;"></div>
<div class="r" style="left:1098px;top:336px;width:464px;height:32px;background:#c8c8c8;"></div>
<div class="r" style="left:1098px;top:362px;width:232px;height:6px;background:#ffffff;"></div>
<div class="r" style="left:1330px;top:362px;width:232px;height:6px;background:#000000;"></div>
<div class="r" style="left:1562px;top:335px;width:37px;height:34px;background:#383838;border-radius:0 4px 4px 0;border:1px solid #242424;border-left:none;box-sizing:border-box;"></div>
<svg class="s" style="left:1572px;top:339px;" width="22" height="24" viewBox="0 0 22 24"><path d="M10 4H17L19 2L22 5L20 7V15H17L10 8Z" fill="#d0d0d0"/><path d="M15 9L5 19" stroke="#9a9a9a" stroke-width="4.5"/><path d="M6 18L1.5 22.5" stroke="#d4d4d4" stroke-width="5"/><rect x="9" y="14" width="2" height="2" fill="#333"/><rect x="11" y="12" width="2" height="2" fill="#333"/></svg>
<div class="t" style="left:797px;top:381px;color:#d2d2d2;font-size:25px;line-height:25px;-webkit-text-stroke:0.4px #383838;">Color Multiplier</div>
<div class="r" style="left:1106px;top:390px;width:384px;height:4px;background:#5e5e5e;"></div>
<svg class="s" style="left:1096px;top:382px;" width="20" height="20" viewBox="0 0 20 20"><circle cx="10" cy="10" r="10" fill="#999"/></svg>
<div class="r" style="left:1500px;top:374px;width:99px;height:35px;background:#2a2a2a;border-radius:4px;border:1px solid #212121;border-top:2px solid #101010;box-sizing:border-box;"></div>
<div class="t" style="left:1506px;top:381px;color:#d2d2d2;font-size:25px;line-height:25px;-webkit-text-stroke:0.4px #2a2a2a;">1</div>
<div class="t" style="left:797px;top:421px;color:#d2d2d2;font-size:25px;line-height:25px;-webkit-text-stroke:0.4px #383838;">Fade Duration</div>
<div class="r" style="left:1097px;top:414px;width:502px;height:36px;background:#2a2a2a;border-radius:4px;border:1px solid #212121;border-top:2px solid #101010;box-sizing:border-box;"></div>
<div class="t" style="left:1103px;top:421px;color:#d2d2d2;font-size:25px;line-height:25px;-webkit-text-stroke:0.4px #2a2a2a;">0.1</div>
<div class="t" style="left:767px;top:477px;color:#d2d2d2;font-size:25px;line-height:25px;-webkit-text-stroke:0.4px #383838;">Navigation</div>
<div class="r" style="left:1097px;top:472px;width:501px;height:33px;background:#515151;border-radius:4px;border:1px solid #303030;border-bottom:2px solid #242424;box-sizing:border-box;"></div>
<div class="t" style="left:1104px;top:475px;color:#d2d2d2;font-size:25px;line-height:25px;-webkit-text-stroke:0.4px #515151;">Automatic</div>
<svg class="s" style="left:1572px;top:484px;" width="16" height="9" viewBox="0 0 16 9"><path d="M0 0H16L8 9Z" fill="#c4c4c4"/></svg>
<div class="r" style="left:1094px;top:516px;width:504px;height:33px;background:#585858;border-radius:4px;border:1px solid #303030;border-bottom:2px solid #242424;box-sizing:border-box;"></div>
<div class="t" style="left:1292px;top:519px;color:#d2d2d2;font-size:25px;line-height:25px;-webkit-text-stroke:0.4px #585858;">Visualize</div>
<div class="r" style="left:728px;top:570px;width:4px;height:40px;background:#0f7fc2;"></div>
<div class="r" style="left:764px;top:570px;width:836px;height:40px;background:#353535;border-radius:4px 4px 0 0;border:2px solid #262626;border-bottom:none;box-sizing:border-box;"></div>
<div class="t" style="left:781px;top:579px;color:#d2d2d2;font-size:25px;line-height:25px;text-shadow:0.5px 0 0 #d2d2d2;">On Click ()</div>
<div class="r" style="left:764px;top:608px;width:836px;height:214px;background:#414141;border-radius:0 0 4px 4px;border:2px solid #262626;box-sizing:border-box;"></div>
<div class="r" style="left:766px;top:716px;width:832px;height:98px;background:#2c5d87;"></div>
<div class="r" style="left:776px;top:634px;width:20px;height:2px;background:#5f5f5f;"></div>
<div class="r" style="left:776px;top:642px;width:20px;height:2px;background:#5f5f5f;"></div>
<div class="r" style="left:776px;top:734px;width:20px;height:2px;background:#7a6d5e;"></div>
<div class="r" style="left:776px;top:742px;width:20px;height:2px;background:#7a6d5e;"></div>
<div class="r" style="left:807px;top:625px;width:232px;height:34px;background:#515151;border-radius:4px;border:1px solid #303030;border-bottom:2px solid #242424;box-sizing:border-box;"></div>
<div class="t" style="left:814px;top:628px;color:#d2d2d2;font-size:25px;line-height:25px;-webkit-text-stroke:0.4px #515151;">Runtime Only</div>
<svg class="s" style="left:1013px;top:637px;" width="16" height="9" viewBox="0 0 16 9"><path d="M0 0H16L8 9Z" fill="#c4c4c4"/></svg>
<div class="r" style="left:1051px;top:625px;width:534px;height:34px;background:#515151;border-radius:4px;border:1px solid #303030;border-bottom:2px solid #242424;box-sizing:border-box;"></div>
<div class="t" style="left:1058px;top:628px;color:#d2d2d2;font-size:25px;line-height:25px;-webkit-text-stroke:0.4px #515151;">GUITournamentListItem.OpenTournament</div>
<svg class="s" style="left:1559px;top:637px;" width="16" height="9" viewBox="0 0 16 9"><path d="M0 0H16L8 9Z" fill="#c4c4c4"/></svg>
<div class="r" style="left:807px;top:664px;width:232px;height:36px;background:#2a2a2a;border-radius:4px;border:1px solid #212121;border-top:2px solid #151515;box-sizing:border-box;overflow:hidden;"></div>
<div class="r" style="left:1001px;top:665px;width:37px;height:34px;background:#383838;border-radius:0 3px 3px 0;"></div>
<svg class="s" style="left:1010px;top:672px;" width="20" height="20" viewBox="0 0 20 20"><circle cx="10" cy="10" r="9" fill="none" stroke="#b0b0b0" stroke-width="2"/><circle cx="10" cy="10" r="3" fill="#c4c4c4"/></svg>
<div class="t" style="left:840px;top:671px;color:#d2d2d2;font-size:25px;line-height:25px;-webkit-text-stroke:0.4px #2a2a2a;width:162px;overflow:hidden;">TournamentLis</div>
<div class="r" style="left:807px;top:722px;width:232px;height:35px;background:#515151;border-radius:4px;border:1px solid #303030;border-bottom:2px solid #242424;box-sizing:border-box;"></div>
<div class="t" style="left:814px;top:725px;color:#d6d6d6;font-size:25px;line-height:25px;text-shadow:0.5px 0 0 #d6d6d6;">Runtime Only</div>
<svg class="s" style="left:1013px;top:734px;" width="16" height="9" viewBox="0 0 16 9"><path d="M0 0H16L8 9Z" fill="#c4c4c4"/></svg>
<div class="r" style="left:1051px;top:722px;width:534px;height:35px;background:#515151;border-radius:4px;border:1px solid #303030;border-bottom:2px solid #242424;box-sizing:border-box;"></div>
<div class="t" style="left:1058px;top:725px;color:#d6d6d6;font-size:25px;line-height:25px;text-shadow:0.5px 0 0 #d6d6d6;letter-spacing:0.5px;width:494px;overflow:hidden;">UITournamentList.OnPlayOpenTournament</div>
<svg class="s" style="left:1559px;top:734px;" width="16" height="9" viewBox="0 0 16 9"><path d="M0 0H16L8 9Z" fill="#c4c4c4"/></svg>
<div class="r" style="left:807px;top:762px;width:232px;height:36px;background:#2a2a2a;border-radius:4px;border:1px solid #212121;border-top:2px solid #151515;box-sizing:border-box;overflow:hidden;"></div>
<div class="r" style="left:1001px;top:763px;width:37px;height:34px;background:#383838;border-radius:0 3px 3px 0;"></div>
<svg class="s" style="left:1010px;top:770px;" width="20" height="20" viewBox="0 0 20 20"><circle cx="10" cy="10" r="9" fill="none" stroke="#b0b0b0" stroke-width="2"/><circle cx="10" cy="10" r="3" fill="#c4c4c4"/></svg>
<div class="t" style="left:840px;top:769px;color:#d6d6d6;font-size:25px;line-height:25px;text-shadow:0.5px 0 0 #d6d6d6;width:162px;overflow:hidden;">Menu (UI Tour</div>
<svg class="s" style="left:815px;top:673px;" width="17" height="21" viewBox="0 0 17 21"><path d="M0 0H14L16 2V20H0Z" fill="#ececec"/><g fill="#3f8a3f"><rect x="6" y="5" width="2" height="14"/><rect x="9" y="5" width="2" height="14"/><rect x="3" y="7" width="9" height="2.5"/><rect x="3" y="12" width="9" height="2.5"/></g><g fill="#9fc79f" opacity="0.6"><rect x="3" y="5" width="3" height="2"/></g></svg>
<svg class="s" style="left:815px;top:771px;" width="17" height="21" viewBox="0 0 17 21"><path d="M0 0H14L16 2V20H0Z" fill="#ececec"/><g fill="#3f8a3f"><rect x="6" y="5" width="2" height="14"/><rect x="9" y="5" width="2" height="14"/><rect x="3" y="7" width="9" height="2.5"/><rect x="3" y="12" width="9" height="2.5"/></g><g fill="#9fc79f" opacity="0.6"><rect x="3" y="5" width="3" height="2"/></g></svg>
<div class="r" style="left:1464px;top:820px;width:116px;height:40px;background:#414141;border-radius:0 0 4px 4px;border:2px solid #2a2a2a;border-top:none;box-sizing:border-box;"></div>
<svg class="s" style="left:1486px;top:828px;" width="20" height="20" viewBox="0 0 20 20"><path d="M10 0V20M0 10H20" stroke="#d0d0d0" stroke-width="4"/></svg>
<div class="r" style="left:1538px;top:836px;width:16px;height:4px;background:#d0d0d0;"></div>
<div class="r" style="left:728px;top:722px;width:4px;height:35px;background:#0f7fc2;"></div>
<div class="r" style="left:728px;top:762px;width:4px;height:35px;background:#0f7fc2;"></div>
<svg class="s" style="left:0px;top:0px;pointer-events:none;" width="1610" height="1016" viewBox="0 0 1610 1016"><path d="M770 763L804 782L770 801Z" fill="#fff"/><path d="M774 770L795 782L774 794Z" fill="#4a1bbd"/><path d="M268 224V764A18 18 0 0 0 286 782H778" fill="none" stroke="#4a1bbd" stroke-width="4"/><circle cx="268" cy="224" r="12" fill="#4a1bbd" stroke="#fff" stroke-width="4"/></svg>
</body></html>
